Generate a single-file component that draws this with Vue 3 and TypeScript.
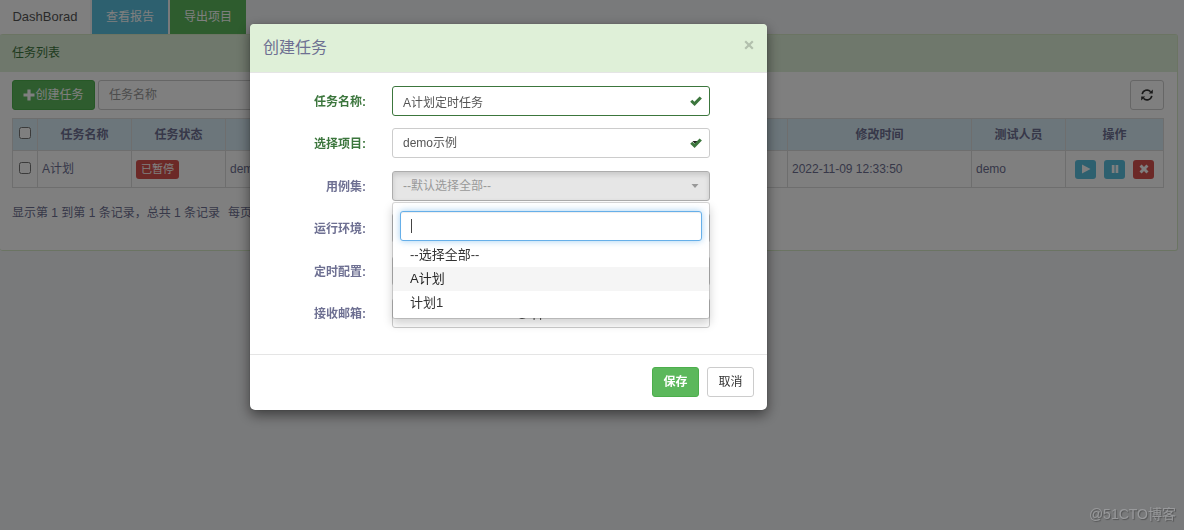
<script setup lang="ts">
import { ref } from 'vue'

interface Option {
  label: string
  active: boolean
}

const taskName = ref('A计划定时任务')
const project = ref('demo示例')
const environment = ref('')
const schedule = ref('')
const keyword = ref('')
const mail = ref('10000000000000000@qq.com')
const options: Option[] = [
  { label: '--选择全部--', active: false },
  { label: 'A计划', active: true },
  { label: '计划1', active: false },
]
</script>

<template>
  <div class="page">
    <nav class="tabs">
      <a class="tab" href="#">DashBorad</a>
      <button class="tab info" type="button">查看报告</button>
      <button class="tab success" type="button">导出项目</button>
    </nav>

    <section class="panel">
      <header class="panel-head">任务列表</header>
      <div class="panel-body">
        <div class="toolbar">
          <button class="btn success create" type="button">
            <svg class="plus" viewBox="0 0 12 12"><path d="M4.4 0.5h3.2v3.9h3.9v3.2H7.6v3.9H4.4V7.6H0.5V4.4h3.9z" /></svg>创建任务
          </button>
          <input class="control search" type="text" placeholder="任务名称" aria-label="任务名称" />
          <button class="btn refresh" type="button" aria-label="刷新">
            <svg viewBox="0 0 12 12">
              <path class="arc" d="M1.2 5.2A4.9 4.9 0 0 1 9.6 2.7M10.8 6.8A4.9 4.9 0 0 1 2.4 9.3" />
              <path d="M11.8 0.6v4H7.8zM0.2 11.4V7.4h4z" />
            </svg>
          </button>
        </div>

        <table>
          <colgroup>
            <col class="c-check" /><col class="c-name" /><col class="c-name" /><col />
            <col class="c-time" /><col class="c-name" /><col class="c-action" />
          </colgroup>
          <thead>
            <tr>
              <th class="check"><input type="checkbox" aria-label="全选" /></th>
              <th>任务名称</th>
              <th>任务状态</th>
              <th></th>
              <th>修改时间</th>
              <th>测试人员</th>
              <th>操作</th>
            </tr>
          </thead>
          <tbody>
            <tr>
              <td class="check"><input type="checkbox" aria-label="选择 A计划" /></td>
              <td>A计划</td>
              <td><span class="badge">已暂停</span></td>
              <td>demo示例</td>
              <td>2022-11-09 12:33:50</td>
              <td>demo</td>
              <td>
                <div class="actions">
                  <button class="mini info" type="button" aria-label="运行">
                    <svg viewBox="0 0 10 10"><path d="M1 0.5L9.5 5L1 9.5z" /></svg>
                  </button>
                  <button class="mini info" type="button" aria-label="暂停">
                    <svg viewBox="0 0 10 10"><path d="M1.8 1h2.7v8H1.8zM5.6 1h2.7v8H5.6z" /></svg>
                  </button>
                  <button class="mini danger" type="button" aria-label="删除">
                    <svg viewBox="0 0 10 10"><path d="M2.6 0.5L5 2.9L7.4 0.5L9.5 2.6L7.1 5L9.5 7.4L7.4 9.5L5 7.1L2.6 9.5L0.5 7.4L2.9 5L0.5 2.6z" /></svg>
                  </button>
                </div>
              </td>
            </tr>
          </tbody>
        </table>
        <p class="summary"><span>显示第 1 到第 1 条记录，总共 1 条记录</span><span>每页显示</span></p>
      </div>
    </section>
  </div>

  <div class="backdrop">
    <form class="modal" role="dialog" aria-labelledby="modal-title" @submit.prevent>
      <header class="modal-head">
        <h4 id="modal-title">创建任务</h4>
        <button class="close" type="button" aria-label="关闭">
          <svg viewBox="0 0 10 10"><path d="M1.2 1.2L8.8 8.8M8.8 1.2L1.2 8.8" /></svg>
        </button>
      </header>
      <div class="fields">
        <div class="row valid">
          <label for="f-name">任务名称:</label>
          <div class="field">
            <input id="f-name" v-model="taskName" class="control" type="text" />
            <svg class="tick" viewBox="0 0 12 12"><path d="M0.2 6.8L2.3 4.7L4.4 6.7L9.6 1.4L11.9 3.6L4.6 11z" /></svg>
          </div>
        </div>
        <div class="row valid">
          <label for="f-project">选择项目:</label>
          <div class="field">
            <select id="f-project" v-model="project" class="control plain">
              <option>demo示例</option>
            </select>
            <svg class="chevron" viewBox="0 0 8 6"><path d="M0.5 1h7L4 5z" /></svg>
            <svg class="tick" viewBox="0 0 12 12"><path d="M0.2 6.8L2.3 4.7L4.4 6.7L9.6 1.4L11.9 3.6L4.6 11z" /></svg>
          </div>
        </div>
        <div class="row">
          <label for="f-suite">用例集:</label>
          <div class="field">
            <button id="f-suite" class="control picker" type="button" aria-expanded="true">
              <span>--默认选择全部--</span>
              <svg viewBox="0 0 8 4"><path d="M0.5 0h7L4 4z" /></svg>
            </button>
            <div class="menu">
              <div class="menu-search">
                <input v-model="keyword" class="control focus" type="text" aria-label="搜索" />
                <span class="caret"></span>
              </div>
              <ul>
                <li v-for="o in options" :key="o.label">
                  <a href="#" :class="{ active: o.active }">{{ o.label }}</a>
                </li>
              </ul>
            </div>
          </div>
        </div>
        <div class="row">
          <label for="f-env">运行环境:</label>
          <div class="field"><select id="f-env" v-model="environment" class="control"></select></div>
        </div>
        <div class="row">
          <label for="f-time">定时配置:</label>
          <div class="field"><input id="f-time" v-model="schedule" class="control" type="text" /></div>
        </div>
        <div class="row">
          <label for="f-mail">接收邮箱:</label>
          <div class="field"><input id="f-mail" v-model="mail" class="control" type="text" /></div>
        </div>
      </div>
      <footer class="modal-foot">
        <button class="btn success save" type="submit">保存</button>
        <button class="btn" type="button">取消</button>
      </footer>
    </form>
  </div>
  <div class="watermark">@51CTO博客</div>
</template>

<style>
body {
  margin: 0;
  background: #f3f4f6;
}
</style>

<style scoped>
.page,
.backdrop,
.watermark {
  font-family: "Liberation Sans", "Noto Sans CJK SC", sans-serif;
  font-size: 12px;
  line-height: 18px;
  color: #6e7092;
}
.page *,
.backdrop * {
  box-sizing: border-box;
}
button,
input,
select {
  font: inherit;
  margin: 0;
}
a {
  text-decoration: none;
  color: inherit;
}
svg {
  display: block;
  flex: none;
  fill: currentColor;
}
.tabs {
  display: flex;
  gap: 2px;
  height: 34px;
}
.tab {
  display: flex;
  align-items: center;
  justify-content: center;
  width: 76px;
  padding: 0;
  border: 0;
  color: #fff;
}
a.tab {
  width: 90px;
  font-size: 13px;
  color: #555;
  background: #fff;
}
.info {
  background: #5bc0de;
  color: #fff;
}
.success {
  background: #5cb85c;
  color: #fff;
}
.danger {
  background: #d9534f;
  color: #fff;
}
.panel {
  margin-right: 6px;
  background: #fff;
  border: 1px solid #d6e9c6;
  border-left: 0;
  border-radius: 3px;
  box-sizing: border-box;
}
.panel-head {
  padding: 9px 12px 10px;
  background: #dff0d8;
  color: #3c763d;
}
.panel-body {
  padding: 8px 13px 28px 12px;
}
.toolbar {
  display: flex;
  gap: 3px;
  margin-bottom: 8px;
}
.btn {
  display: flex;
  align-items: center;
  justify-content: center;
  height: 30px;
  min-width: 47px;
  padding: 0 10px;
  border: 1px solid #ccc;
  border-radius: 3px;
  background: #fff;
  color: #333;
}
.btn.success {
  background: #5cb85c;
  border-color: #4cae4c;
  color: #fff;
}
.create {
  min-width: 83px;
}
.plus {
  width: 12px;
  height: 12px;
}
.control {
  display: block;
  width: 100%;
  height: 30px;
  padding: 0 10px;
  border: 1px solid #ccc;
  border-radius: 3px;
  background: #fff;
  color: #555;
  outline: 0;
}
.search {
  width: 180px;
}
.search::placeholder {
  color: #999;
}
.refresh {
  min-width: 34px;
  padding: 0;
  margin-left: auto;
}
.refresh svg {
  width: 12px;
  height: 12px;
}
.arc {
  fill: none;
  stroke: currentColor;
  stroke-width: 1.6;
}
table {
  width: 100%;
  table-layout: fixed;
  border-collapse: collapse;
}
.c-check { width: 25px; }
.c-name { width: 94px; }
.c-time { width: 184px; }
.c-action { width: 98px; }
th,
td {
  padding: 0 4px;
  border: 1px solid #ddd;
}
th {
  height: 32px;
  background: #d9edf7;
}
td {
  height: 37px;
}
.check {
  padding: 0;
}
.check input {
  display: block;
  width: 12px;
  height: 12px;
  margin: -3px auto 0;
}
.badge {
  display: inline-block;
  padding: 0 5px;
  border-radius: 3px;
  background: #d9534f;
  color: #fff;
  font-size: 11px;
  line-height: 19px;
}
.actions {
  display: flex;
  justify-content: center;
  gap: 8px;
}
.mini {
  display: flex;
  align-items: center;
  justify-content: center;
  width: 21px;
  height: 19px;
  padding: 0;
  border: 0;
  border-radius: 3px;
}
.mini svg {
  width: 10px;
  height: 10px;
}
.summary {
  display: flex;
  gap: 8px;
  margin: 16px 0 0;
}
.backdrop {
  position: fixed;
  inset: 0;
  padding: 24px 20px 20px 250px;
  background: rgba(0, 0, 0, 0.5);
}
.modal {
  max-width: 517px;
  border-radius: 5px;
  background: #fff;
  box-shadow: 0 0 1px rgba(0, 0, 0, 0.5), 0 5px 13px rgba(0, 0, 0, 0.5);
}
.modal-head {
  display: flex;
  align-items: flex-start;
  justify-content: space-between;
  padding: 12px 13px;
  border-bottom: 1px solid #e5e5e5;
  border-radius: 4px 4px 0 0;
  background: #dff0d8;
}
h4 {
  margin: 0;
  font-size: 16px;
  line-height: 24px;
  font-weight: 400;
}
.close {
  padding: 4px 0;
  border: 0;
  background: none;
  color: #b2c0ad;
}
.close svg {
  width: 10px;
  height: 10px;
  fill: none;
  stroke: currentColor;
  stroke-width: 2.2;
}
.fields {
  display: flex;
  flex-direction: column;
  justify-content: space-between;
  min-height: 242px;
  margin: 13px 57px 26px 13px;
}
.row {
  display: grid;
  grid-template-columns: 103px 1fr;
  column-gap: 26px;
  align-items: center;
}
label {
  padding-top: 2px;
  text-align: right;
  font-weight: 700;
}
.field {
  position: relative;
}
.valid {
  color: #3c763d;
}
.valid .control {
  border-color: #3c763d;
}
.valid .plain {
  border-color: #ccc;
}
select.control {
  appearance: none;
}
.tick {
  position: absolute;
  right: 8px;
  top: 9px;
  width: 12px;
  height: 12px;
}
.chevron {
  position: absolute;
  right: 10px;
  top: 12px;
  width: 8px;
  height: 6px;
  color: #222;
}
.picker {
  display: flex;
  align-items: center;
  justify-content: space-between;
  background: #e6e6e6;
  border-color: #adadad;
  color: #999;
  box-shadow: inset 0 3px 5px rgba(0, 0, 0, 0.125);
}
.picker svg {
  width: 8px;
  height: 4px;
}
.menu {
  position: absolute;
  z-index: 2;
  top: 31px;
  left: 0;
  right: 0;
  padding: 8px 0 3px;
  border: 1px solid rgba(0, 0, 0, 0.15);
  border-radius: 3px;
  background: #fff;
  background-clip: padding-box;
  box-shadow: 0 5px 10px rgba(0, 0, 0, 0.175);
  font-size: 13px;
}
.menu-search {
  position: relative;
  margin: 0 7px 2px;
}
.focus {
  border-color: #66afe9;
  box-shadow: inset 0 1px 1px rgba(0, 0, 0, 0.075), 0 0 7px rgba(102, 175, 233, 0.6);
}
.caret {
  position: absolute;
  left: 11px;
  top: 8px;
  width: 1px;
  height: 14px;
  background: #444;
}
ul {
  list-style: none;
  margin: 0;
  padding: 0;
}
li a {
  display: block;
  padding: 0 17px;
  line-height: 24px;
  color: #333;
}
li a.active {
  background: #f5f5f5;
  color: #262626;
}
.modal-foot {
  display: flex;
  justify-content: flex-end;
  gap: 8px;
  padding: 12px 13px 13px;
  border-top: 1px solid #e5e5e5;
}
.save {
  font-weight: 700;
}
.watermark {
  position: fixed;
  right: 8px;
  bottom: 7px;
  font-size: 14px;
  color: #98999b;
  text-shadow: 1px 1px 1px rgba(0, 0, 0, 0.3);
}
</style>
